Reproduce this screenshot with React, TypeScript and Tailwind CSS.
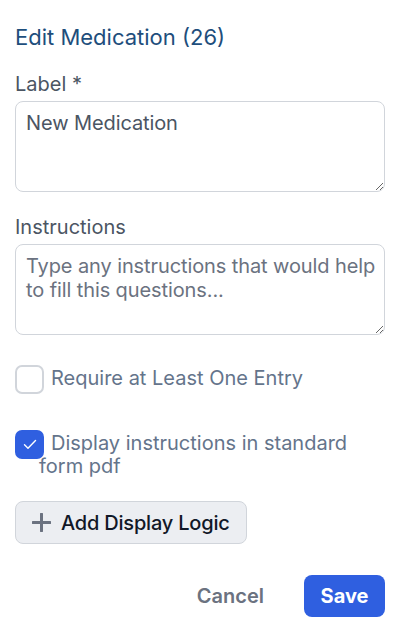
import React from 'react';

const font = { fontFamily: 'Inter, "Noto Sans", sans-serif' };

const CheckBox = ({ checked }: { checked: boolean }) => (
  <span
    className={
      checked
        ? 'inline-flex items-center justify-center w-[29px] h-[29px] -my-[4px] -ml-6 mr-[7px] align-middle rounded-[7px] bg-[#2f5fe0]'
        : 'inline-flex items-center justify-center w-[29px] h-[29px] -my-[4px] -ml-6 mr-[7px] align-middle rounded-[7px] bg-white border-2 border-[#d1d5db]'
    }
  >
    {checked && (
      <svg width="14" height="11" viewBox="0 0 14 11" fill="none">
        <path d="M1.5 5.8 L5 9.2 L12.5 1.5" stroke="white" strokeWidth="1.4" strokeLinecap="round" strokeLinejoin="round" />
      </svg>
    )}
  </span>
);

const Field = ({ label, value, placeholder }: { label: string; value?: string; placeholder?: string }) => (
  <div>
    <label className="block text-[20px] leading-6 text-[#4b5563] mb-[5px]">{label}</label>
    <textarea
      defaultValue={value}
      placeholder={placeholder}
      className="block w-full h-[91px] rounded-lg border border-[#d1d5db] bg-white pl-2.5 pr-0.5 pt-[9px] text-[20px] leading-6 tracking-[-0.1px] text-[#4b5563] placeholder:text-[#6b7280] outline-none"
      style={font}
    />
  </div>
);

export default function App() {
  return (
    <div className="min-h-screen bg-white pl-[15px] pr-[19px] pt-[23px]" style={font}>
      <h2 className="text-[22px] leading-7 font-normal text-[#1e4e7c] mb-[21px]">Edit Medication (26)</h2>

      <Field label="Label *" value="New Medication" />
      <div className="mt-[23px]">
        <Field label="Instructions" placeholder="Type any instructions that would help to fill this questions..." />
      </div>

      <div className="mt-8 pl-6 text-[20px] leading-[23px] text-[#64748b]">
        <CheckBox checked={false} />
        Require at Least One Entry
      </div>

      <div className="mt-[42px] pl-6 pr-8 text-[20px] leading-[23px] text-[#64748b]">
        <CheckBox checked={true} />
        Display instructions in standard form pdf
      </div>

      <button className="mt-[23px] flex items-center gap-[10px] w-[232px] h-[43px] pl-4 rounded-lg border border-[#d1d5db] bg-[#eceef2] text-[20px] font-medium tracking-[-0.2px] text-[#111827]">
        <svg width="19" height="19" viewBox="0 0 19 19">
          <path d="M9.5 1 V18 M1 9.5 H18" stroke="#6b7280" strokeWidth="3" strokeLinecap="round" />
        </svg>
        Add Display Logic
      </button>

      <div className="mt-[31px] flex items-center justify-end gap-6">
        <button className="px-4 text-[20px] font-semibold text-[#6b7280]">Cancel</button>
        <button className="w-[81px] h-[42px] rounded-lg bg-[#2f5fe0] text-[20px] font-bold text-white">Save</button>
      </div>
    </div>
  );
}
